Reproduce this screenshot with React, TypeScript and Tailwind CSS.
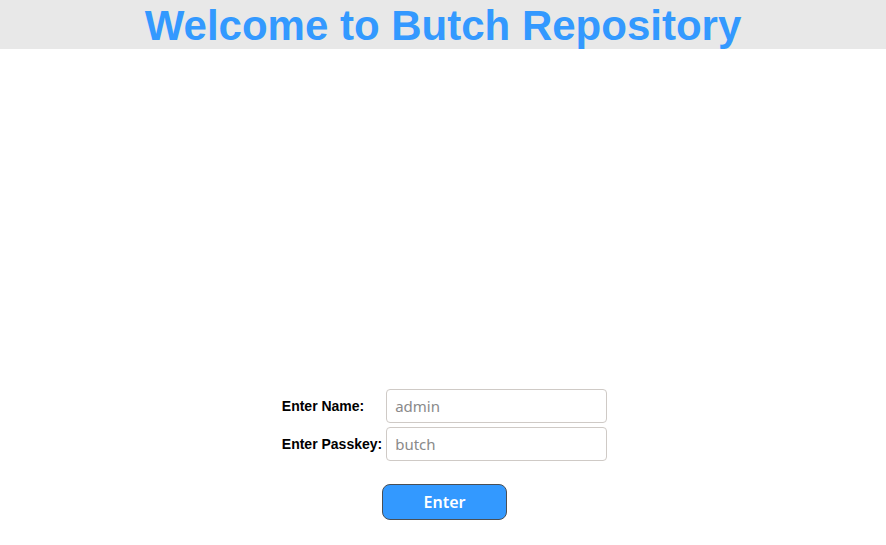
export default function App() {
  return (
    <div className="min-h-screen bg-white">
      <header className="h-[49px] bg-[#e8e8e8] flex items-center justify-center overflow-hidden">
        <h1 className="text-[42px] font-bold leading-none text-[#3399ff] font-['Liberation_Sans',Arial,sans-serif] pt-[2px]">
          Welcome to Butch Repository
        </h1>
      </header>

      <form className="mt-[336px] pl-[3px] flex flex-col items-center">
        <table className="border-separate border-spacing-x-[2px] border-spacing-y-[4px]">
          <tbody>
            <tr>
              <td className="pr-[2px] text-[14px] font-bold text-black font-['Liberation_Sans',Arial,sans-serif]">
                Enter Name:
              </td>
              <td>
                <input
                  type="text"
                  placeholder="admin"
                  className="w-[221px] h-[34px] rounded-[4px] border border-[#cfcac6] px-[8px] text-[15px] font-['Noto_Sans',sans-serif] placeholder:text-[#8a8a8a] outline-none"
                />
              </td>
            </tr>
            <tr>
              <td className="pr-[2px] text-[14px] font-bold text-black font-['Liberation_Sans',Arial,sans-serif]">
                Enter Passkey:
              </td>
              <td>
                <input
                  type="password"
                  placeholder="butch"
                  className="w-[221px] h-[34px] rounded-[4px] border border-[#cfcac6] px-[8px] text-[15px] font-['Noto_Sans',sans-serif] placeholder:text-[#8a8a8a] outline-none"
                />
              </td>
            </tr>
          </tbody>
        </table>
        <button
          type="button"
          className="mt-[19px] w-[125px] h-[36px] rounded-[8px] border border-[#4a4f55] bg-[#3399ff] text-white text-[16px] font-semibold font-['Noto_Sans',sans-serif]"
        >
          Enter
        </button>
      </form>
    </div>
  );
}
